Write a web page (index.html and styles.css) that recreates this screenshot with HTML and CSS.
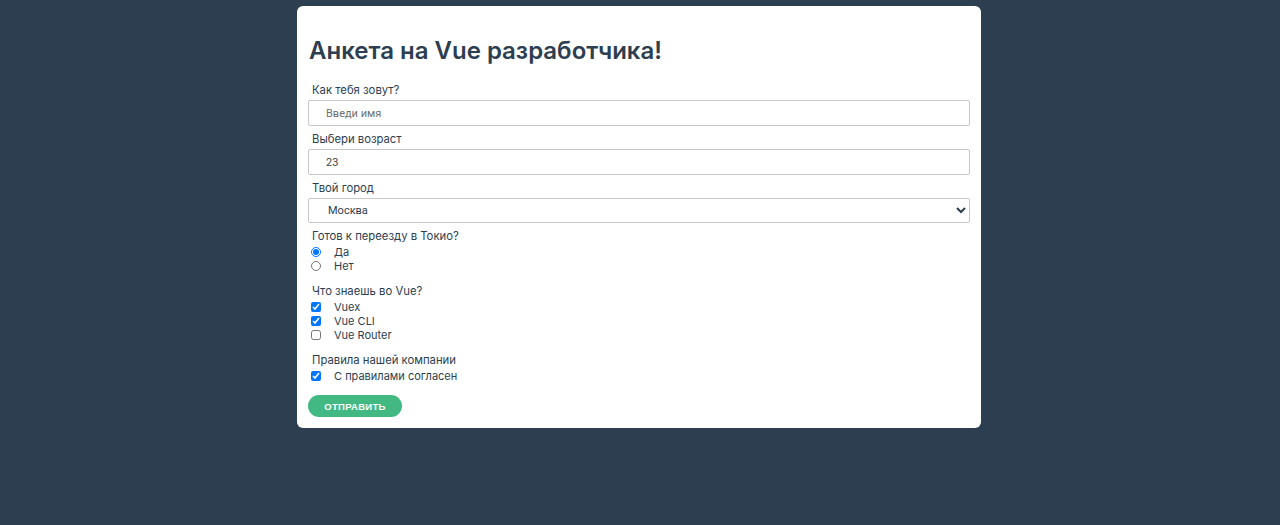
FILE: index.html
```html
<!DOCTYPE html>
<html lang="ru">
<head>
<meta charset="utf-8">
<title>Анкета</title>
<link rel="stylesheet" href="styles.css">
</head>
<body>
<main class="card">
  <h1 class="title">Анкета на Vue разработчика!</h1>
  <form class="form">
    <div class="field">
      <label class="label" for="name">Как тебя зовут?</label>
      <input class="control" id="name" type="text" placeholder="Введи имя">
    </div>
    <div class="field">
      <label class="label" for="age">Выбери возраст</label>
      <input class="control" id="age" type="text" value="23">
    </div>
    <div class="field">
      <label class="label" for="city">Твой город</label>
      <select class="control select" id="city">
        <option>Москва</option>
      </select>
    </div>
    <div class="group">
      <div class="label glabel">Готов к переезду в Токио?</div>
      <label class="opt"><input type="radio" name="tokyo" checked><span>Да</span></label>
      <label class="opt"><input type="radio" name="tokyo"><span>Нет</span></label>
    </div>
    <div class="group">
      <div class="label glabel">Что знаешь во Vue?</div>
      <label class="opt"><input type="checkbox" checked><span>Vuex</span></label>
      <label class="opt"><input type="checkbox" checked><span>Vue CLI</span></label>
      <label class="opt"><input type="checkbox"><span>Vue Router</span></label>
    </div>
    <div class="group">
      <div class="label glabel">Правила нашей компании</div>
      <label class="opt"><input type="checkbox" checked><span>С правилами согласен</span></label>
    </div>
    <button class="btn" type="button">Отправить</button>
  </form>
</main>
</body>
</html>
```
FILE: styles.css
```css
* { box-sizing: border-box; }
html, body { margin: 0; }
body {
  background: #2c3e50;
  font-family: Inter, "Noto Sans", Arial, sans-serif;
  color: #2c3e50;
  padding: 6px 2px 0 0;
}
.card {
  width: 684px;
  margin: 0 auto;
  background: #fff;
  border-radius: 6px;
  padding: 24px 11px 11px;
}
.title {
  margin: 0 0 0 1px;
  font-size: 24px;
  font-weight: 600;
  line-height: 42px;
  color: #2c3e50;
}
.form {
  display: flex;
  flex-direction: column;
  margin-top: 10px;
}
.field {
  display: flex;
  flex-direction: column;
  margin-bottom: 5px;
}
.label {
  font-size: 11.3px;
  line-height: 16px;
  margin: 0 0 2px 4px;
  color: #2c3e50;
}
.glabel {
  margin-bottom: 1px;
}
.control {
  width: 100%;
  height: 26px;
  border: 1px solid #c8c8c8;
  border-radius: 2px;
  padding: 0 17px;
  font-family: Roboto, Arial, sans-serif;
  font-size: 11px;
  color: #444;
  background: #fff;
  outline: none;
}
.control::placeholder { color: #6f6f6f; }
.select {
  height: 25px;
  padding-left: 15px;
  color: #2c3e50;
}
.group {
  display: flex;
  flex-direction: column;
  margin-bottom: 10px;
}
.opt {
  display: flex;
  align-items: center;
  height: 14px;
  font-size: 11px;
  color: #2c3e50;
}
.opt input {
  margin: 0 13px 0 3px;
  width: 10px;
  height: 10px;
}
.btn {
  align-self: flex-start;
  width: 94px;
  height: 22px;
  margin-top: 2px;
  border: none;
  border-radius: 11px;
  background: #42b983;
  color: #fff;
  font-family: Arial, "Liberation Sans", sans-serif;
  font-weight: 700;
  font-size: 9.5px;
  text-transform: uppercase;
  letter-spacing: 0.3px;
}
```
